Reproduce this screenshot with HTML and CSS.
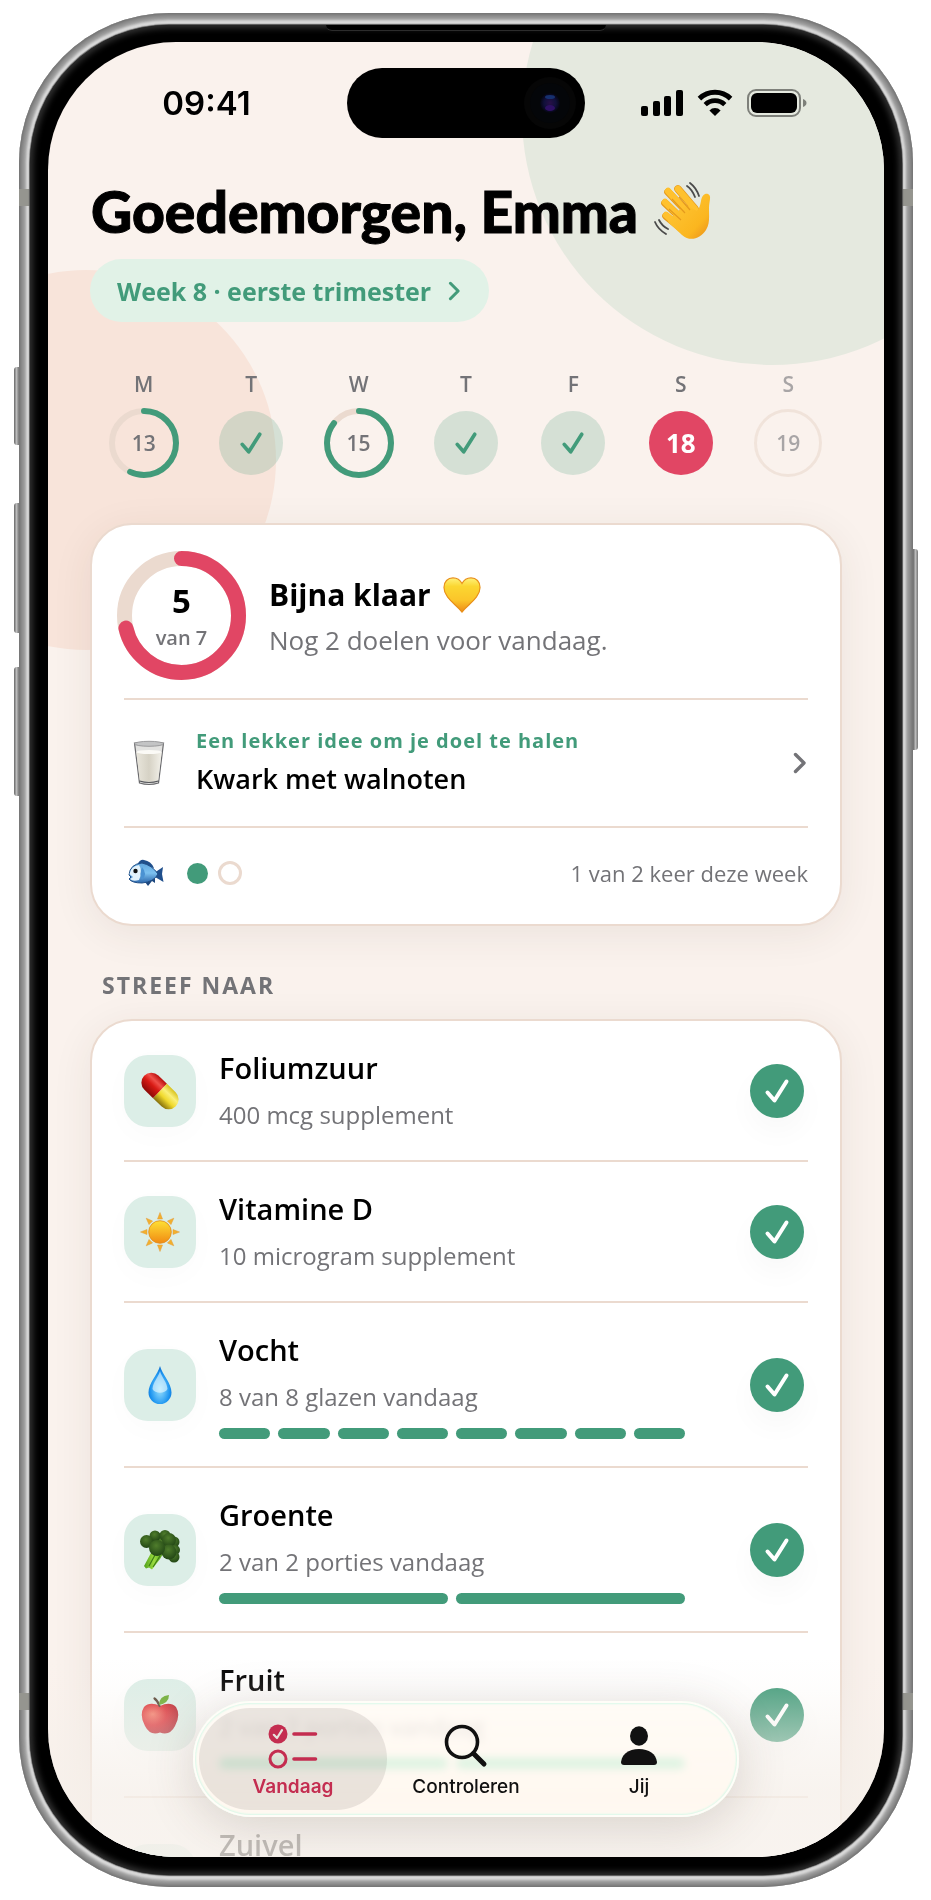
FILE: index.html
```html
<!DOCTYPE html>
<html lang="nl">
    <head>
        <meta charset="utf-8">
        <title>Vandaag</title>
        <link rel="stylesheet" href="styles.css">
    </head>
    <body>
        <!-- shared shapes and gradients -->
        <svg class="defs" width="0" height="0" aria-hidden="true">
            <defs>
                <symbol id="tick" viewBox="0 0 26 26">
                    <path d="M3.5 14.5 L10.5 22.5 L22.5 3.5" fill="none" stroke="currentColor" stroke-width="4" stroke-linecap="round" stroke-linejoin="round"/>
                </symbol>
                <symbol id="chevron" viewBox="0 0 14 22">
                    <path d="M2.5 2.5 L11 11 L2.5 19.5" fill="none" stroke="currentColor" stroke-width="3.4" stroke-linecap="round" stroke-linejoin="round"/>
                </symbol>
                <linearGradient id="hand" x1="0" y1="0" x2="1" y2="1"><stop offset="0" stop-color="#ffc93a"/><stop offset=".7" stop-color="#fbb61f"/><stop offset="1" stop-color="#e88d1c"/></linearGradient>
                <linearGradient id="heart" x1="0" y1="0" x2="0" y2="1"><stop offset="0" stop-color="#fff27a"/><stop offset=".25" stop-color="#fbd631"/><stop offset=".65" stop-color="#fbc52a"/><stop offset="1" stop-color="#ee8a16"/></linearGradient>
                <linearGradient id="milk" x1="0" y1="0" x2="1" y2="0"><stop offset="0" stop-color="#e9e6dc"/><stop offset=".5" stop-color="#d6d2c5"/><stop offset="1" stop-color="#f3f1ea"/></linearGradient>
                <linearGradient id="fish" x1="0" y1="0" x2="0" y2="1"><stop offset="0" stop-color="#5fa5de"/><stop offset=".5" stop-color="#7cc1f0"/><stop offset="1" stop-color="#2b66ab"/></linearGradient>
                <linearGradient id="red" x1="0" y1="0" x2="0" y2="1"><stop offset="0" stop-color="#b80d0c"/><stop offset=".3" stop-color="#f0504a"/><stop offset=".55" stop-color="#d81a14"/><stop offset="1" stop-color="#8c0a08"/></linearGradient>
                <linearGradient id="yellow" x1="0" y1="0" x2="0" y2="1"><stop offset="0" stop-color="#d8c21f"/><stop offset=".3" stop-color="#faf07a"/><stop offset=".6" stop-color="#f0d92c"/><stop offset="1" stop-color="#86700c"/></linearGradient>
                <linearGradient id="sun" x1="0" y1="0" x2="0" y2="1"><stop offset="0" stop-color="#fee034"/><stop offset="1" stop-color="#f18a12"/></linearGradient>
                <radialGradient id="drop" cx=".5" cy=".62" r=".6"><stop offset="0" stop-color="#9be0fd"/><stop offset=".35" stop-color="#5cbcf8"/><stop offset=".7" stop-color="#1e95f0"/><stop offset="1" stop-color="#0c6fd2"/></radialGradient>
                <radialGradient id="leaf" cx=".45" cy=".35" r=".65"><stop offset="0" stop-color="#4f7d2c"/><stop offset="1" stop-color="#234715"/></radialGradient>
                <linearGradient id="stem" x1="0" y1="0" x2="1" y2="0"><stop offset="0" stop-color="#4f9f1b"/><stop offset=".5" stop-color="#9bdc3f"/><stop offset="1" stop-color="#4a961a"/></linearGradient>
                <radialGradient id="apple" cx=".3" cy=".35" r=".75"><stop offset="0" stop-color="#f2705c"/><stop offset=".5" stop-color="#d82027"/><stop offset="1" stop-color="#a80c18"/></radialGradient>
                <radialGradient id="lens"><stop offset="0" stop-color="#281048"/><stop offset=".6" stop-color="#10103a"/><stop offset="1" stop-color="#050510"/></radialGradient>
            </defs>
        </svg>

        <div class="phone">
            <span class="key key-action"></span>
            <span class="key key-up"></span>
            <span class="key key-down"></span>
            <span class="key key-side"></span>
            <span class="band band-top"></span>
            <span class="band band-bottom"></span>
            <div class="bezel">
                <span class="earpiece"></span>
                <div class="screen">
                    <div class="blob blob-green"></div>
                    <div class="blob blob-peach"></div>

                    <div class="status">
                        <span class="time">09:41</span>
                        <div class="island">
                            <svg width="54" height="54" viewBox="0 0 54 54">
                                <circle cx="27" cy="27" r="26" fill="#060606"/>
                                <circle cx="27" cy="27" r="20" fill="#040609"/>
                                <circle cx="27" cy="27" r="10" fill="url(#lens)"/>
                                <ellipse cx="27" cy="21" rx="5" ry="2" fill="#16306e"/>
                                <ellipse cx="27" cy="32" rx="5" ry="3" fill="#2e1064"/>
                            </svg>
                        </div>
                        <div class="signals">
                            <svg width="43" height="28" viewBox="0 0 43 28">
                                <rect x="1" y="17" width="7" height="10" rx="2"/>
                                <rect x="13" y="12" width="7" height="15" rx="2"/>
                                <rect x="24" y="7" width="7" height="20" rx="2"/>
                                <rect x="36" y="1" width="7" height="26" rx="2"/>
                            </svg>
                            <svg width="38" height="28" viewBox="0 0 38 28">
                                <path d="M3.4 9.6 A22.5 22.5 0 0 1 34.6 9.6" fill="none" stroke="#000" stroke-width="5"/>
                                <path d="M9.2 15.6 A14 14 0 0 1 28.8 15.6" fill="none" stroke="#000" stroke-width="4.6"/>
                                <path d="M19 27 L13.4 21.4 A8 8 0 0 1 24.6 21.4 Z"/>
                            </svg>
                            <svg width="60" height="28" viewBox="0 0 60 28">
                                <rect x="1" y="1" width="52" height="26" rx="8" fill="none" stroke="#000" stroke-opacity=".45" stroke-width="2"/>
                                <rect x="4" y="4" width="46" height="20" rx="6"/>
                                <path d="M56 10 Q59.500 11.500 59.500 14 Q59.500 16.500 56 18 Z" opacity=".45"/>
                            </svg>
                        </div>
                    </div>

                    <main class="content">
                        <h1>
                            Goedemorgen, Emma
                            <svg width="58" height="58" viewBox="0 0 58 58" role="img" aria-label="zwaaiende hand">
                                <path d="M12 34 L28 47 M11 21 L30 39 M14 10 L34 31 M24 7 L41 27" fill="none" stroke="#e59a1d" stroke-width="7.600" stroke-linecap="round"/>
                                <path d="M12 33 L28 47 M11 20 L30 39 M14 9 L34 31 M24 7 L41 27" fill="none" stroke="#ffc12e" stroke-width="6.400" stroke-linecap="round"/>
                                <path d="M43 29 C45 27 46 24 47 19 C48 13 51 11 54 12 C58 14 55 19 55 26 C55 35 56 42 52 48 C46 57 36 60 28 53 L14 40 C18 34 28 24 34 24 Z" fill="url(#hand)"/>
                                <path d="M15 27 L27 38 M18 17 L31 31 M25 15 L36 28" stroke="#e59a1d" stroke-width="1.200" fill="none"/>
                                <path d="M33 4 C36 6 39 10 41 15 M36 1 C40 4 43 8 45 14" fill="none" stroke="#4a4a4a" stroke-width="1.800" stroke-linecap="round"/>
                                <path d="M1 40 C3 45 7 49 12 52 M5 38 C7 42 10 45 14 47" fill="none" stroke="#4a4a4a" stroke-width="1.800" stroke-linecap="round"/>
                            </svg>
                        </h1>
                        <a class="pill" href="#week">Week 8 · eerste trimester
                            <svg width="13" height="20"><use href="#chevron"/></svg>
                        </a>

                        <div class="week" id="week">
                            <button class="day">
                                <span class="letter">M</span>
                                <span class="disc">
                                    <svg class="ring" width="70" height="70" viewBox="0 0 70 70">
                                        <circle class="track" cx="35" cy="35" r="32"/>
                                        <circle class="fill" cx="35" cy="35" r="32" pathLength="7" stroke-dasharray="4 7"/>
                                    </svg>
                                    13
                                </span>
                            </button>
                            <button class="day">
                                <span class="letter">T</span>
                                <span class="disc done"><svg width="24" height="24"><use href="#tick"/></svg></span>
                            </button>
                            <button class="day">
                                <span class="letter">W</span>
                                <span class="disc">
                                    <svg class="ring" width="70" height="70" viewBox="0 0 70 70">
                                        <circle class="track" cx="35" cy="35" r="32"/>
                                        <circle class="fill" cx="35" cy="35" r="32" pathLength="7" stroke-dasharray="6 7"/>
                                    </svg>
                                    15
                                </span>
                            </button>
                            <button class="day">
                                <span class="letter">T</span>
                                <span class="disc done"><svg width="24" height="24"><use href="#tick"/></svg></span>
                            </button>
                            <button class="day">
                                <span class="letter">F</span>
                                <span class="disc done"><svg width="24" height="24"><use href="#tick"/></svg></span>
                            </button>
                            <button class="day">
                                <span class="letter">S</span>
                                <span class="disc today">18</span>
                            </button>
                            <button class="day later">
                                <span class="letter">S</span>
                                <span class="disc empty">19</span>
                            </button>
                        </div>

                        <section class="card">
                            <div class="summary">
                                <div class="score">
                                    <svg width="129" height="129" viewBox="0 0 129 129">
                                        <circle class="track" cx="64.5" cy="64.5" r="57"/>
                                        <circle class="fill" cx="64.5" cy="64.5" r="57" pathLength="7" stroke-dasharray="5 7"/>
                                    </svg>
                                    <strong>5</strong>
                                    <span>van 7</span>
                                </div>
                                <div>
                                    <h2>Bijna klaar
                                        <svg width="38" height="38" viewBox="0 0 40 38" role="img" aria-label="geel hart">
                                            <path d="M20 37 C14 29 1 22 1 11 C1 5 5 1 10.500 1 C15 1 18.500 4 20 7 C21.500 4 25 1 29.500 1 C35 1 39 5 39 11 C39 22 26 29 20 37 Z" fill="url(#heart)" stroke="#e88f1a" stroke-width="1.200"/>
                                        </svg>
                                    </h2>
                                    <p>Nog 2 doelen voor vandaag.</p>
                                </div>
                            </div>
                            <a class="idea" href="#idee">
                                <svg width="50" height="50" viewBox="0 0 50 50" role="img" aria-label="glas melk">
                                    <path d="M10.500 5 L39.500 5 L34.500 45 Q25 48 15.500 45 Z" fill="#e2e2e0" stroke="#6a6a6d" stroke-width="1.200"/>
                                    <path d="M12.300 14 Q25 17 37.700 14 L34.200 42.500 Q25 45 15.800 42.500 Z" fill="url(#milk)"/>
                                    <ellipse cx="25" cy="5.800" rx="14.500" ry="2.500" fill="#c3c4c5" stroke="#8b8c8e" stroke-width=".8"/>
                                    <ellipse cx="25" cy="14" rx="12.500" ry="2" fill="#fbfaf6"/>
                                    <path d="M15.500 43 Q25 46 34.500 43" fill="none" stroke="#55565a" stroke-width="1.200"/>
                                </svg>
                                <div>
                                    <small>Een lekker idee om je doel te halen</small>
                                    <b>Kwark met walnoten</b>
                                </div>
                                <svg class="more" width="14" height="22"><use href="#chevron"/></svg>
                            </a>
                            <div class="fish">
                                <svg width="36" height="28" viewBox="0 0 36 28" role="img" aria-label="vis">
                                    <path d="M9 6 Q12 0 16 1 Q23 2 26 9 Z" fill="#1f4f8c"/>
                                    <path d="M17 23 L20 27 L24 22 L27 24 L27 18 Z" fill="#1d477e"/>
                                    <path d="M26 14 L35 8 L34 15 L35.500 23 L27 18 Z" fill="#1f4f8c"/>
                                    <path d="M1 16 Q2 5 14 4 Q24 6 30 15 Q26 23 14 24 Q4 24 1 20 L3 18 Z" fill="url(#fish)" stroke="#204e86"/>
                                    <path d="M1.500 15 Q3 7 11 6 Q15 12 11 21 Q5 23 2 20 L5 18 Z" fill="#e2f2fb"/>
                                    <path d="M14 8 Q20 15 14 21 Q11 15 14 8" fill="#4b92d2"/>
                                    <circle cx="7.500" cy="12" r="2.200" fill="#111"/>
                                </svg>
                                <span class="dot full"></span>
                                <span class="dot"></span>
                                <span class="count">1 van 2 keer deze week</span>
                            </div>
                        </section>

                        <h3>STREEF NAAR</h3>

                        <section class="card goals">
                            <div class="goal">
                                <span class="tile">
                                    <svg width="40" height="40" viewBox="0 0 40 40">
                                        <g transform="rotate(44 20 20)">
                                            <path d="M20 10 H8 A10 10 0 0 0 8 30 H20 Z" fill="url(#red)"/>
                                            <path d="M20 10 H32 A10 10 0 0 1 32 30 H20 Z" fill="url(#yellow)"/>
                                        </g>
                                    </svg>
                                </span>
                                <div class="info">
                                    <h4>Foliumzuur</h4>
                                    <p>400 mcg supplement</p>
                                </div>
                                <label class="check"><input type="checkbox" checked aria-label="Foliumzuur"><svg width="26" height="26"><use href="#tick"/></svg></label>
                            </div>
                            <div class="goal">
                                <span class="tile">
                                    <svg width="40" height="40" viewBox="0 0 40 40">
                                        <g fill="#f3b02c" stroke="#e39a3a" stroke-width=".5">
                                            <path id="ray" d="M20 0.500 L22.500 7 H17.500 Z"/>
                                            <use href="#ray" transform="rotate(45 20 20)"/>
                                            <use href="#ray" transform="rotate(90 20 20)"/>
                                            <use href="#ray" transform="rotate(135 20 20)"/>
                                            <use href="#ray" transform="rotate(180 20 20)"/>
                                            <use href="#ray" transform="rotate(225 20 20)"/>
                                            <use href="#ray" transform="rotate(270 20 20)"/>
                                            <use href="#ray" transform="rotate(315 20 20)"/>
                                        </g>
                                        <circle cx="20" cy="20" r="11.300" fill="url(#sun)" stroke="#e08a1c" stroke-width=".8"/>
                                    </svg>
                                </span>
                                <div class="info">
                                    <h4>Vitamine D</h4>
                                    <p>10 microgram supplement</p>
                                </div>
                                <label class="check"><input type="checkbox" checked aria-label="Vitamine D"><svg width="26" height="26"><use href="#tick"/></svg></label>
                            </div>
                            <div class="goal">
                                <span class="tile">
                                    <svg width="40" height="40" viewBox="0 0 40 40">
                                        <path d="M20 1 C22 9 31.500 18 31.500 27.500 A11.500 11.500 0 0 1 8.500 27.500 C8.500 18 18 9 20 1 Z" fill="url(#drop)"/>
                                        <path d="M20 6 C21.500 12 27 17 27.500 24 C25 29 15 29 12.500 24 C13 17 18.500 12 20 6 Z" fill="#e4f7ff" opacity=".65"/>
                                    </svg>
                                </span>
                                <div class="info">
                                    <h4>Vocht</h4>
                                    <p>8 van 8 glazen vandaag</p>
                                    <div class="steps"><i></i><i></i><i></i><i></i><i></i><i></i><i></i><i></i></div>
                                </div>
                                <label class="check"><input type="checkbox" checked aria-label="Vocht"><svg width="26" height="26"><use href="#tick"/></svg></label>
                            </div>
                            <div class="goal">
                                <span class="tile">
                                    <svg width="40" height="40" viewBox="0 0 40 40">
                                        <path d="M4 36 L11 23 L24 22 L20 29 L12 39.500 L9 37.500 L6 38.500 Z" fill="url(#stem)"/>
                                        <path d="M9 36 L15 25 M13 37 L20 26" stroke="#3b7d15" stroke-width="1.200" fill="none"/>
                                        <g fill="url(#leaf)">
                                            <circle cx="21" cy="13" r="10"/>
                                            <circle cx="15" cy="6" r="5.500"/>
                                            <circle cx="25" cy="5.500" r="5.500"/>
                                            <circle cx="6.500" cy="11.500" r="6.500"/>
                                            <circle cx="34" cy="12" r="5.500"/>
                                            <circle cx="29" cy="10" r="7"/>
                                            <circle cx="35" cy="20" r="5"/>
                                            <circle cx="34" cy="27" r="5.500"/>
                                            <circle cx="29" cy="22" r="7.500"/>
                                            <circle cx="17" cy="18" r="8"/>
                                        </g>
                                    </svg>
                                </span>
                                <div class="info">
                                    <h4>Groente</h4>
                                    <p>2 van 2 porties vandaag</p>
                                    <div class="steps"><i></i><i></i></div>
                                </div>
                                <label class="check"><input type="checkbox" checked aria-label="Groente"><svg width="26" height="26"><use href="#tick"/></svg></label>
                            </div>
                            <div class="goal">
                                <span class="tile">
                                    <svg width="40" height="40" viewBox="0 0 40 40">
                                        <path d="M20 11 Q30 6 36 12 Q41 20 35 31 Q30 41 20 37.500 Q10 41 5 31 Q-1 20 4 12 Q10 6 20 11 Z" fill="url(#apple)"/>
                                        <path d="M19.500 11 Q18 6 14.500 3.500" stroke="#4b3626" stroke-width="2.200" fill="none" stroke-linecap="round"/>
                                        <path d="M19 10 Q19 1 29 0 Q29 8 19 10 Z" fill="#5fa522"/>
                                    </svg>
                                </span>
                                <div class="info">
                                    <h4>Fruit</h4>
                                    <p>2 van 2 porties vandaag</p>
                                    <div class="steps"><i></i><i></i></div>
                                </div>
                                <label class="check"><input type="checkbox" checked aria-label="Fruit"><svg width="26" height="26"><use href="#tick"/></svg></label>
                            </div>
                            <div class="goal upcoming">
                                <span class="tile"></span>
                                <div class="info">
                                    <h4>Zuivel</h4>
                                </div>
                            </div>
                        </section>
                    </main>

                    <div class="fade"></div>
                    <nav class="tabs">
                        <a class="active" href="#vandaag">
                            <svg width="50" height="46" viewBox="0 0 50 46">
                                <circle cx="10" cy="10" r="9.500" fill="currentColor"/>
                                <path d="M5.800 10.800 L9 14 L14 6.200" fill="none" stroke="#e7e3dd" stroke-width="2.200" stroke-linecap="round" stroke-linejoin="round"/>
                                <circle cx="10" cy="35" r="8" fill="none" stroke="currentColor" stroke-width="3"/>
                                <path d="M26 10 H47.500 M26 35 H47.500" stroke="currentColor" stroke-width="3.600" stroke-linecap="round"/>
                            </svg>
                            Vandaag
                        </a>
                        <a href="#controleren">
                            <svg width="44" height="46" viewBox="0 0 44 46">
                                <circle cx="18" cy="18" r="15.500" fill="none" stroke="currentColor" stroke-width="3.600"/>
                                <path d="M29.500 29.500 L40 40" stroke="currentColor" stroke-width="5" stroke-linecap="round"/>
                            </svg>
                            Controleren
                        </a>
                        <a href="#jij">
                            <svg width="38" height="46" viewBox="0 0 38 46">
                                <ellipse cx="19" cy="12" rx="9" ry="9.700" fill="currentColor"/>
                                <path d="M4 41 Q1 41 1 38 C2 30 9 25 19 25 C29 25 36 30 37 38 Q37 41 34 41 Z" fill="currentColor"/>
                            </svg>
                            Jij
                        </a>
                    </nav>
                </div>
            </div>
        </div>
    </body>
</html>
```
FILE: styles.css
```css
* {
    box-sizing: border-box;
}
body {
    margin: 0;
    padding: 13px 18px 13px 19px;
    background: #fff;
    color: #000;
    font-family: "Open Sans", sans-serif;
}
h1, h2, h3, h4, p {
    margin: 0;
}
a {
    color: inherit;
    text-decoration: none;
}
svg {
    display: block;
    flex: none;
}
.defs {
    position: absolute;
}

/* device */
.phone {
    position: relative;
    padding: 12px 11px;
    border-radius: 150px;
    background: #b4b4b4;
    box-shadow: inset 0 0 4px 2px #6c6c6c, inset 0 0 3px 7px #9c9c9c, inset 0 0 2px 11px #dedede;
}
.bezel {
    position: relative;
    padding: 17px 18px 18px;
    border-radius: 139px;
    background: #000;
    box-shadow: 0 0 1px 1px #555, inset 0 0 6px 3px #333;
}
.key {
    position: absolute;
    left: -5px;
    width: 5px;
    border-radius: 3px 0 0 3px;
    background: linear-gradient(90deg, #666, #bbb 50%, #777);
}
.key-action {
    top: 354px;
    height: 78px;
}
.key-up {
    top: 490px;
    height: 130px;
}
.key-down {
    top: 654px;
    height: 129px;
}
.key-side {
    left: auto;
    right: -5px;
    top: 536px;
    height: 201px;
    border-radius: 0 3px 3px 0;
}
.band {
    position: absolute;
    left: 0;
    right: 0;
    height: 17px;
    background: #95958f;
}
.band-top {
    top: 176px;
}
.band-bottom {
    bottom: 177px;
}
.earpiece {
    position: absolute;
    top: 0;
    left: 34%;
    right: 34%;
    height: 6px;
    border-bottom: 1px solid #2c2c2c;
    border-radius: 0 0 8px 8px;
    background: #000;
}
.screen {
    position: relative;
    aspect-ratio: 836 / 1815;
    overflow: hidden;
    border-radius: 128px;
    background: #faf2ed;
}
.blob {
    position: absolute;
    border-radius: 50%;
}
.blob-green {
    top: -177px;
    right: -138px;
    width: 500px;
    height: 500px;
    background: #e5e9df;
}
.blob-peach {
    top: 228px;
    left: -152px;
    width: 380px;
    height: 380px;
    background: #f8e4da;
}

/* status bar */
.status {
    position: relative;
    display: grid;
    grid-template-columns: 1fr 238px 1fr;
    align-items: center;
    padding: 26px 0 0;
}
.time {
    padding-left: 18px;
    font: 600 33px/40px Inter, sans-serif;
    text-align: center;
}
.island {
    display: flex;
    justify-content: flex-end;
    align-items: center;
    height: 70px;
    padding-right: 8px;
    border-radius: 35px;
    background: #000;
}
.signals {
    display: flex;
    gap: 13px;
    padding-left: 55px;
}

/* content */
.content {
    position: relative;
    padding: 0 42px;
}
h1 {
    display: flex;
    align-items: center;
    gap: 16px;
    margin-top: 41px;
    padding-left: 1px;
    font: 900 57px/64px Lato, sans-serif;
    -webkit-text-stroke: 1px #000;
    stroke-linejoin: round;
    white-space: nowrap;
}
.pill {
    display: inline-flex;
    align-items: center;
    gap: 17px;
    height: 63px;
    margin-top: 16px;
    padding: 0 28px 0 27px;
    border-radius: 32px;
    background: #e1f2e7;
    color: #429b7a;
    font-size: 25px;
    font-weight: 700;
    white-space: nowrap;
}
.week {
    display: grid;
    grid-template-columns: repeat(7, 1fr);
    margin-top: 48px;
}
.day {
    display: flex;
    flex-direction: column;
    align-items: center;
    gap: 10px;
    padding: 0;
    border: 0;
    background: none;
    color: #737377;
    font: 600 21px/28px "Open Sans", sans-serif;
}
.disc {
    position: relative;
    display: grid;
    place-items: center;
    width: 70px;
    height: 70px;
    border-radius: 50%;
    border: 3px solid transparent;
    background-clip: padding-box;
}
.ring {
    position: absolute;
    top: -3px;
    left: -3px;
}
.track, .fill {
    fill: none;
    stroke: #ebdacf;
    stroke-width: 6;
}
.fill {
    stroke: #429b7a;
    stroke-linecap: round;
    transform: rotate(-90deg);
    transform-origin: center;
}
.done {
    background-color: rgba(66, 155, 122, .2);
    color: #429b7a;
}
.today {
    background-color: #e14664;
    color: #fff;
    font-size: 26px;
    font-weight: 700;
}
.later {
    opacity: .6;
}
.empty {
    width: 68px;
    height: 68px;
    margin-top: 1px;
    border: 3px solid #ebdacf;
}

.card {
    margin-top: 45px;
    padding: 0 32px;
    border: 2px solid #ebdacf;
    border-radius: 42px;
    background: #fff;
    box-shadow: 0 8px 40px rgba(60, 50, 40, .08);
}
.summary {
    display: flex;
    align-items: center;
    gap: 23px;
    margin-left: -7px;
    padding: 26px 0 18px;
}
.score {
    position: relative;
    display: flex;
    flex-direction: column;
    align-items: center;
    justify-content: center;
    gap: 2px;
    width: 129px;
    height: 129px;
    color: #737377;
    font-size: 20px;
    font-weight: 600;
    line-height: 28px;
}
.score svg {
    position: absolute;
    top: 0;
    left: 0;
}
.score .track, .score .fill {
    stroke-width: 15;
}
.score .fill {
    stroke: #e14664;
}
.score strong {
    color: #000;
    font-size: 33px;
    font-weight: 700;
    line-height: 42px;
}
h2 {
    display: flex;
    align-items: center;
    gap: 12px;
    font-size: 30px;
    font-weight: 700;
    line-height: 42px;
}
.summary p {
    margin-top: 6px;
    color: #737377;
    font-size: 26px;
    line-height: 36px;
}
.idea {
    display: flex;
    align-items: center;
    gap: 22px;
    padding: 27px 1px 28px 0;
    border-top: 2px solid #ebdacf;
    border-bottom: 2px solid #ebdacf;
}
.idea small {
    display: block;
    color: #429b7a;
    font-size: 20px;
    font-weight: 700;
    line-height: 28px;
    letter-spacing: 1px;
}
.idea b {
    display: block;
    margin-top: 5px;
    font-size: 27px;
    font-weight: 600;
    line-height: 38px;
}
.more {
    margin-left: auto;
    color: #737377;
}
.fish {
    display: flex;
    align-items: center;
    gap: 10px;
    height: 96px;
    padding: 0 0 6px 4px;
    color: #737377;
    font-size: 22px;
    font-weight: 500;
}
.fish svg {
    margin-right: 13px;
}
.dot {
    width: 24px;
    height: 24px;
    border: 3px solid #ebdacf;
    border-radius: 50%;
}
.full {
    width: 21px;
    height: 21px;
    border: 0;
    background: #429b7a;
}
.count {
    margin-left: auto;
}
h3 {
    margin-top: 44px;
    padding-left: 12px;
    color: #737377;
    font-size: 23px;
    font-weight: 700;
    line-height: 30px;
    letter-spacing: 2px;
}

/* goals */
.goals {
    margin-top: 19px;
}
.goal {
    display: flex;
    align-items: center;
    padding-right: 4px;
    border-bottom: 2px solid #ebdacf;
}
.tile {
    display: grid;
    place-items: center;
    width: 72px;
    height: 72px;
    border-radius: 24px;
    background: #dceee7;
    box-shadow: 0 8px 30px rgba(0, 0, 0, .02);
}
.info {
    flex: 1;
    padding: 27px 65px 27px 23px;
}
h4 {
    font-size: 29px;
    font-weight: 600;
    line-height: 40px;
}
.info p {
    margin-top: 9px;
    color: #737377;
    font-size: 24px;
    font-weight: 500;
    line-height: 36px;
}
.steps {
    display: flex;
    gap: 8px;
    margin-top: 13px;
}
.steps i {
    flex: 1;
    height: 11px;
    border-radius: 6px;
    background: #429b7a;
}
.upcoming {
    min-height: 165px;
}
.upcoming .info {
    align-self: flex-start;
}
.check {
    display: grid;
    place-items: center;
    color: #fff;
}
.check input, .check svg {
    grid-area: 1 / 1;
}
.check input {
    appearance: none;
    width: 54px;
    height: 54px;
    margin: 0;
    border-radius: 50%;
    background: #429b7a;
    box-shadow: 0 14px 30px rgba(0, 0, 0, .03);
}
.check svg {
    position: relative;
}

/* tab bar */
.fade {
    position: absolute;
    left: 0;
    right: 0;
    bottom: 0;
    height: 200px;
    background: linear-gradient(rgba(246, 240, 234, 0), rgba(246, 240, 234, .1) 14%, rgba(246, 240, 234, .5) 42%, rgba(246, 240, 234, .78) 68%, rgba(246, 240, 234, .78));
}
.tabs {
    position: absolute;
    bottom: 40px;
    left: 50%;
    display: flex;
    width: 546px;
    margin-left: -273px;
    padding: 7px 6px;
    border-radius: 58px;
    background: rgba(255, 251, 245, .72);
    backdrop-filter: blur(4px) saturate(3);
    box-shadow: 0 8px 50px rgba(70, 55, 45, .18), inset 0 0 0 2px #fffdf8, inset 0 0 2px 3px #d9f8e8;
}
.tabs a {
    display: flex;
    flex: 1;
    flex-direction: column;
    align-items: center;
    gap: 2px;
    height: 102px;
    padding-top: 16px;
    border-radius: 51px;
    color: #111;
    font: 500 19px/30px Inter, sans-serif;
}
.tabs a + a {
    margin-left: -15px;
}
.tabs .active {
    background: rgba(60, 50, 50, .11);
    color: #c42d50;
    font-weight: 600;
}
```
